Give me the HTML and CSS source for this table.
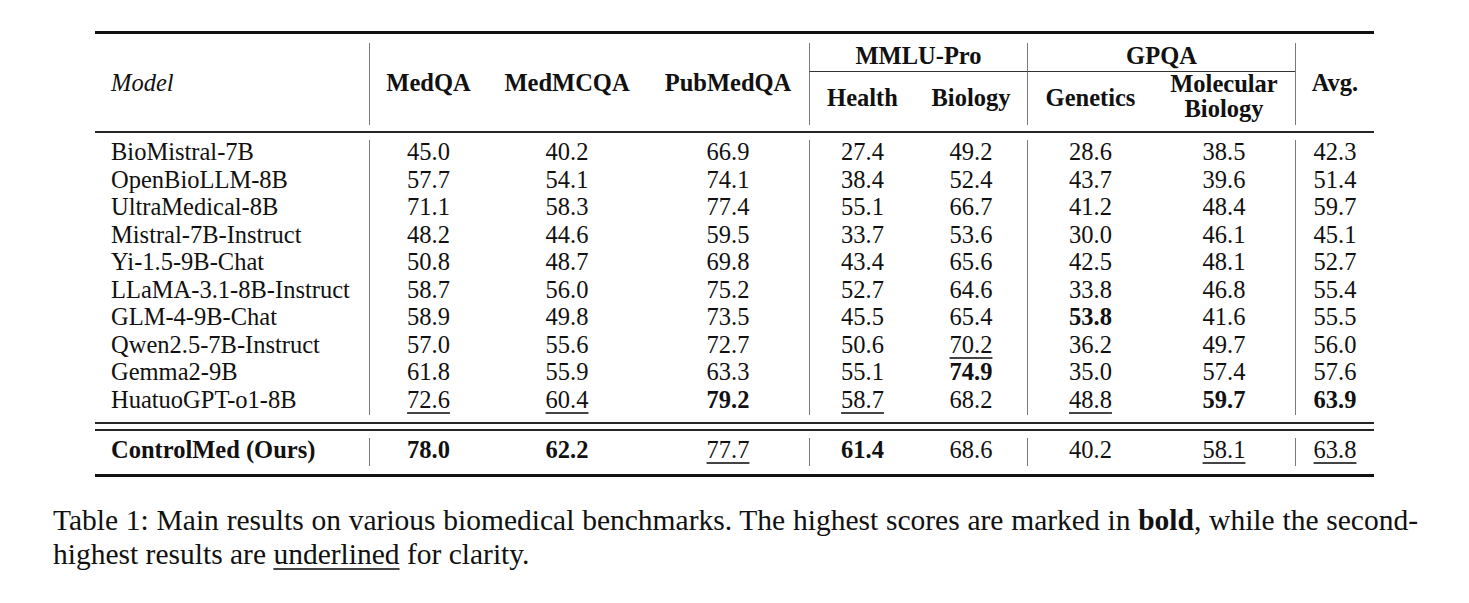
FILE: index.html
```html
<!DOCTYPE html>
<html lang="en">
<head>
<meta charset="utf-8">
<title>Table 1</title>
<link rel="stylesheet" href="styles.css">
</head>
<body>
<div class="page">
  <table class="results">
    <colgroup>
      <col class="c-model"><col class="c-medqa"><col class="c-medmcqa"><col class="c-pubmed">
      <col class="c-health"><col class="c-bio"><col class="c-gen"><col class="c-mol"><col class="c-avg">
    </colgroup>
    <thead>
      <tr class="rule rule-thick"><td colspan="9"></td></tr>
      <tr class="gap gap-top"><td colspan="9"></td></tr>
      <tr class="hdr-a">
        <th rowspan="2" class="model model-h">Model</th>
        <th rowspan="2" class="vl">MedQA</th>
        <th rowspan="2">MedMCQA</th>
        <th rowspan="2">PubMedQA</th>
        <th colspan="2" class="vl group">MMLU-Pro</th>
        <th colspan="2" class="vl group">GPQA</th>
        <th rowspan="2" class="vl">Avg.</th>
      </tr>
      <tr class="hdr-b">
        <th class="vl">Health</th>
        <th>Biology</th>
        <th class="vl">Genetics</th>
        <th class="two-line">Molecular<br>Biology</th>
      </tr>
      <tr class="gap gap-6"><td colspan="9"></td></tr>
      <tr class="rule rule-mid"><td colspan="9"></td></tr>
      <tr class="gap gap-7"><td colspan="9"></td></tr>
    </thead>
    <tbody>
      <tr class="row"><td class="model">BioMistral-7B</td><td>45.0</td><td>40.2</td><td>66.9</td><td>27.4</td><td>49.2</td><td>28.6</td><td>38.5</td><td>42.3</td></tr>
      <tr class="row"><td class="model">OpenBioLLM-8B</td><td>57.7</td><td>54.1</td><td>74.1</td><td>38.4</td><td>52.4</td><td>43.7</td><td>39.6</td><td>51.4</td></tr>
      <tr class="row"><td class="model">UltraMedical-8B</td><td>71.1</td><td>58.3</td><td>77.4</td><td>55.1</td><td>66.7</td><td>41.2</td><td>48.4</td><td>59.7</td></tr>
      <tr class="row"><td class="model">Mistral-7B-Instruct</td><td>48.2</td><td>44.6</td><td>59.5</td><td>33.7</td><td>53.6</td><td>30.0</td><td>46.1</td><td>45.1</td></tr>
      <tr class="row"><td class="model">Yi-1.5-9B-Chat</td><td>50.8</td><td>48.7</td><td>69.8</td><td>43.4</td><td>65.6</td><td>42.5</td><td>48.1</td><td>52.7</td></tr>
      <tr class="row"><td class="model">LLaMA-3.1-8B-Instruct</td><td>58.7</td><td>56.0</td><td>75.2</td><td>52.7</td><td>64.6</td><td>33.8</td><td>46.8</td><td>55.4</td></tr>
      <tr class="row"><td class="model">GLM-4-9B-Chat</td><td>58.9</td><td>49.8</td><td>73.5</td><td>45.5</td><td>65.4</td><td><b>53.8</b></td><td>41.6</td><td>55.5</td></tr>
      <tr class="row"><td class="model">Qwen2.5-7B-Instruct</td><td>57.0</td><td>55.6</td><td>72.7</td><td>50.6</td><td><u>70.2</u></td><td>36.2</td><td>49.7</td><td>56.0</td></tr>
      <tr class="row"><td class="model">Gemma2-9B</td><td>61.8</td><td>55.9</td><td>63.3</td><td>55.1</td><td><b>74.9</b></td><td>35.0</td><td>57.4</td><td>57.6</td></tr>
      <tr class="row"><td class="model">HuatuoGPT-o1-8B</td><td><u>72.6</u></td><td><u>60.4</u></td><td><b>79.2</b></td><td><u>58.7</u></td><td>68.2</td><td><u>48.8</u></td><td><b>59.7</b></td><td><b>63.9</b></td></tr>
    </tbody>
    <tbody>
      <tr class="gap gap-7"><td colspan="9"></td></tr>
      <tr class="rule rule-mid"><td colspan="9"></td></tr>
      <tr class="gap gap-5"><td colspan="9"></td></tr>
      <tr class="rule rule-mid"><td colspan="9"></td></tr>
      <tr class="gap gap-7"><td colspan="9"></td></tr>
      <tr class="row"><td class="model"><b>ControlMed (Ours)</b></td><td><b>78.0</b></td><td><b>62.2</b></td><td><u>77.7</u></td><td><b>61.4</b></td><td>68.6</td><td>40.2</td><td><u>58.1</u></td><td><u>63.8</u></td></tr>
      <tr class="gap gap-8"><td colspan="9"></td></tr>
      <tr class="rule rule-thick"><td colspan="9"></td></tr>
    </tbody>
  </table>
  <p class="caption"><span class="line-one">Table 1: Main results on various biomedical benchmarks. The highest scores are marked in <b>bold</b>, while the second-</span>highest results are <u>underlined</u> for clarity.</p>
</div>
</body>
</html>
```

FILE: styles.css
```css
* {
  box-sizing: border-box;
}

html,
body {
  margin: 0;
  background: #ffffff;
}

body {
  font-family: "Liberation Serif", "Times New Roman", serif;
  color: #111111;
}

.page {
  padding-top: 31px;
}

.results {
  margin-left: 95px;
  width: 1279px;
  table-layout: fixed;
  border-collapse: separate;
  border-spacing: 0;
  font-size: 24.5px;
  line-height: 27.5px;
}

.c-model { width: 274px; }
.c-medqa { width: 118px; }
.c-medmcqa { width: 160px; }
.c-pubmed { width: 162px; }
.c-health { width: 106px; }
.c-bio { width: 112px; }
.c-gen { width: 126px; }
.c-mol { width: 142px; }
.c-avg { width: 79px; }

.results th,
.results td {
  padding: 0;
  text-align: center;
  vertical-align: middle;
  white-space: nowrap;
}

.results th {
  font-weight: bold;
  line-height: 25px;
}

.results .model {
  text-align: left;
  padding-left: 16px;
}

.results .model-h {
  font-weight: normal;
  font-style: italic;
}

.rule td,
.gap td {
  font-size: 0;
  line-height: 0;
  padding: 0;
}

.rule-thick td {
  height: 3px;
  background: #111111;
}

.rule-mid td {
  height: 2px;
  background: #262626;
}

.gap-top td { height: 9px; }
.gap-5 td { height: 5px; }
.gap-6 td { height: 6px; }
.gap-7 td { height: 7px; }
.gap-8 td { height: 8px; }

.hdr-a th {
  height: 28px;
  padding-bottom: 3px;
}

.hdr-b th {
  height: 53px;
  padding-bottom: 3px;
}

.hdr-b th.two-line {
  line-height: 24.5px;
  padding-bottom: 4px;
}

.results .group {
  border-bottom: 1px solid #333333;
}

.vl {
  border-left: 1px solid #7a7a7a;
}

.row td {
  height: 27.5px;
  line-height: 23.5px;
  padding-bottom: 4px;
}

.row td:nth-child(2),
.row td:nth-child(5),
.row td:nth-child(7),
.row td:nth-child(9) {
  border-left: 1px solid #7a7a7a;
}

b {
  font-weight: bold;
}

u {
  text-decoration: underline;
  text-decoration-thickness: 1.5px;
  text-underline-offset: 4px;
  text-decoration-color: #444444;
}

.caption {
  margin: 26px 0 0 53px;
  width: 1365px;
  font-size: 29.5px;
  line-height: 34px;
}

.caption .line-one {
  display: block;
  text-align: justify;
  text-align-last: justify;
}
```
